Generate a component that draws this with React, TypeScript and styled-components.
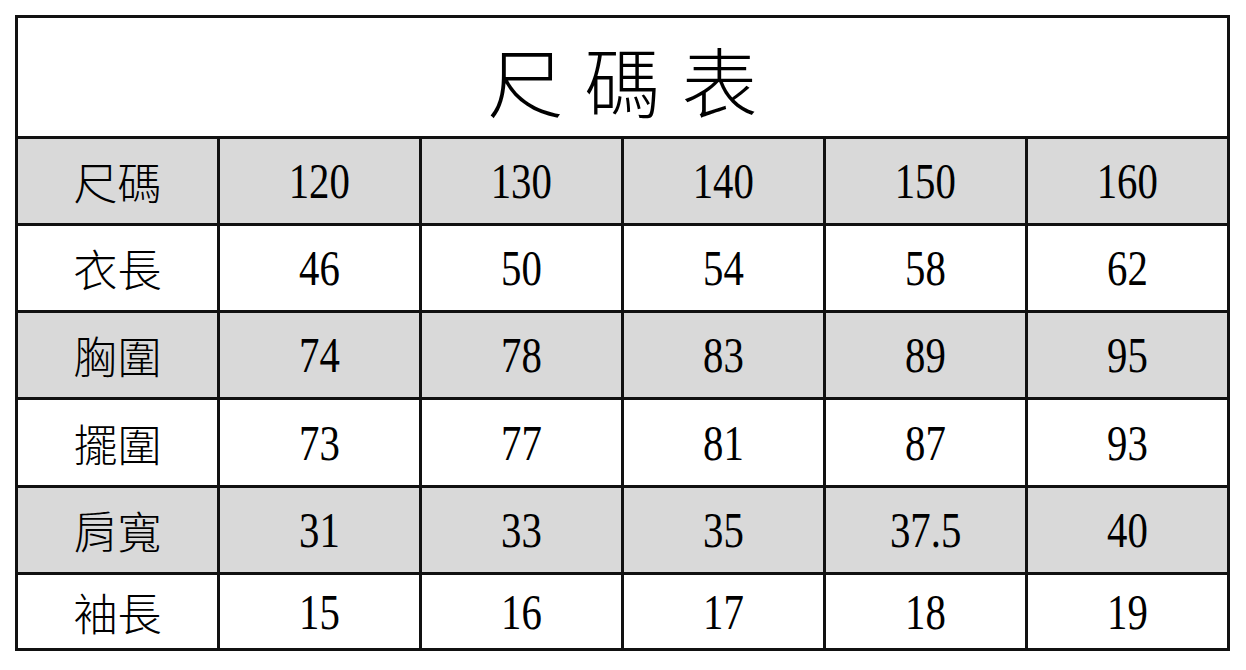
import styled, { createGlobalStyle } from "styled-components";

const sizes = ["120", "130", "140", "150", "160"];

const rows: { label: string; values: string[] }[] = [
  { label: "衣長", values: ["46", "50", "54", "58", "62"] },
  { label: "胸圍", values: ["74", "78", "83", "89", "95"] },
  { label: "擺圍", values: ["73", "77", "81", "87", "93"] },
  { label: "肩寬", values: ["31", "33", "35", "37.5", "40"] },
  { label: "袖長", values: ["15", "16", "17", "18", "19"] },
];

const App: React.FC = () => {
  return (
    <>
      <GlobalStyle />
      <SizeTable>
        <TitleCell>尺碼表</TitleCell>
        <LabelCell shaded>尺碼</LabelCell>
        {sizes.map((size) => (
          <Cell key={size} shaded>
            <Num>{size}</Num>
          </Cell>
        ))}
        {rows.map((row, i) => (
          <Row key={row.label} shaded={i % 2 === 1} label={row.label} values={row.values} />
        ))}
      </SizeTable>
    </>
  );
};

const Row: React.FC<{ label: string; values: string[]; shaded: boolean }> = ({
  label,
  values,
  shaded,
}) => (
  <>
    <LabelCell shaded={shaded}>{label}</LabelCell>
    {values.map((value, i) => (
      <Cell key={i} shaded={shaded}>
        <Num>{value}</Num>
      </Cell>
    ))}
  </>
);

export default App;

const GlobalStyle = createGlobalStyle`
  body {
    margin: 0;
    background: #ffffff;
  }
`;

// 표 전체: 검은 배경 + gap 으로 3px 선을 만든다
const SizeTable = styled.div`
  display: grid;
  grid-template-columns: repeat(6, 199px);
  grid-template-rows: 118px 84px 84px 84px 85px 84px 73px;
  gap: 3px;
  padding: 3px;
  width: fit-content;
  margin: 15px 0 0 15px;
  background: #111111;
`;

const TitleCell = styled.div`
  grid-column: 1 / -1;
  display: flex;
  align-items: center;
  justify-content: center;
  padding: 4px 0 0 21px;
  background: #ffffff;
  color: #000000;
  font-family: "Noto Sans CJK TC", "Noto Sans CJK SC", sans-serif;
  font-weight: 300;
  font-size: 76px;
  letter-spacing: 21px;
`;

const Cell = styled.div<{ shaded?: boolean }>`
  display: flex;
  align-items: center;
  justify-content: center;
  background: ${(props) => (props.shaded ? "#d9d9d9" : "#ffffff")};
  color: #000000;
`;

const LabelCell = styled(Cell)`
  font-family: "Noto Sans CJK TC", "Noto Sans CJK SC", sans-serif;
  font-weight: 300;
  font-size: 44px;
`;

const Num = styled.span`
  display: inline-block;
  font-family: "Liberation Serif", "Times New Roman", serif;
  font-size: 51px;
  transform: scaleX(0.8);
`;
